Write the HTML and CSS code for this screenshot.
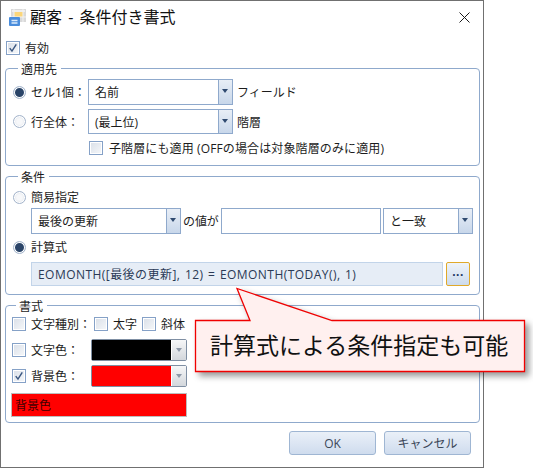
FILE: index.html
```html
<!DOCTYPE html>
<html lang="ja">
<head>
<meta charset="utf-8">
<title>顧客 - 条件付き書式</title>
<link rel="stylesheet" href="styles.css">
</head>
<body>
<svg class="defs" width="0" height="0" aria-hidden="true">
  <symbol id="tick" viewBox="0 0 14 14"><path d="M3.2 7.2 L5.8 10.6 L10.8 2.8" fill="none" stroke="#3a5680" stroke-width="1.7"/></symbol>
</svg>
<div class="window">
  <header class="titlebar">
    <div class="title-left">
      <svg class="app-icon" width="17" height="17" viewBox="0 0 17 17">
        <rect x="2" y="0" width="15" height="13" fill="#d9d9d9"/>
        <rect x="3" y="1" width="13" height="2" fill="#eeeeee"/>
        <rect x="5" y="3" width="9" height="5" fill="#fbd67a"/>
        <path d="M5 0V13M14 0V13M2 8H17" stroke="#f2f2f2" stroke-width="1"/>
        <rect x="0" y="8" width="11" height="9" rx="1" fill="#4a8ddc"/>
        <path d="M2.500 11.500H8.500M2.500 14H8.500" stroke="#dcebfb" stroke-width="1.400"/>
      </svg>
      <h1 class="title">顧客 - 条件付き書式</h1>
    </div>
    <svg class="close" width="11" height="11" viewBox="0 0 11 11"><path d="M.5.5 10.500 10.500M10.500.5.5 10.500" stroke="#1a1a1a" stroke-width="1"/></svg>
  </header>

  <label class="row enable"><span class="check on"><svg width="12" height="12"><use href="#tick"/></svg></span><span class="text">有効</span></label>

  <fieldset class="group group-target">
    <legend>適用先</legend>
    <div class="row">
      <span class="radio on"></span><span class="text radio-label">セル1個：</span>
      <div class="combo c-wide"><span class="value">名前</span><span class="arrow"></span></div>
      <span class="text after">フィールド</span>
    </div>
    <div class="row row-second">
      <span class="radio"></span><span class="text radio-label">行全体：</span>
      <div class="combo c-wide c-short"><span class="value">(最上位)</span><span class="arrow"></span></div>
      <span class="text after">階層</span>
    </div>
    <label class="row sub-check"><span class="check"></span><span class="text sub-text">子階層にも適用 (OFFの場合は対象階層のみに適用)</span></label>
  </fieldset>

  <fieldset class="group group-cond">
    <legend>条件</legend>
    <div class="row radio-row"><span class="radio"></span><span class="text">簡易指定</span></div>
    <div class="row indent simple">
      <div class="combo c-field"><span class="value">最後の更新</span><span class="arrow"></span></div>
      <span class="text tight">の値が</span>
      <div class="input"></div>
      <div class="combo c-op"><span class="value">と一致</span><span class="arrow"></span></div>
    </div>
    <div class="row radio-row second"><span class="radio on"></span><span class="text">計算式</span></div>
    <div class="row indent formula-row">
      <div class="formula">EOMONTH([最後の更新], 12) = EOMONTH(TODAY(), 1)</div>
      <button class="more" type="button">...</button>
    </div>
  </fieldset>

  <fieldset class="group group-format">
    <legend>書式</legend>
    <div class="row f-first">
      <span class="check"></span><span class="text f-label">文字種別：</span>
      <span class="check"></span><span class="text f-bold">太字</span>
      <span class="check"></span><span class="text f-italic">斜体</span>
    </div>
    <div class="row f-color">
      <span class="check"></span><span class="text f-label">文字色：</span>
      <div class="swatch"><span class="swatch-fill black"></span><span class="swatch-arrow"></span></div>
    </div>
    <div class="row f-color f-next">
      <span class="check on"><svg width="12" height="12"><use href="#tick"/></svg></span><span class="text f-label">背景色：</span>
      <div class="swatch"><span class="swatch-fill red"></span><span class="swatch-arrow"></span></div>
    </div>
    <div class="preview">背景色</div>
  </fieldset>

  <footer class="footer">
    <button class="btn" type="button">OK</button>
    <button class="btn" type="button">キャンセル</button>
  </footer>
</div>

<aside class="callout">
  <svg class="callout-shape" width="533" height="468" viewBox="0 0 533 468">
    <path d="M195.500 320.500H250L237 288.500 332 320.500H524.500V371.500H195.500Z" fill="#fff0ef" stroke="#f00000" stroke-width="1.300"/>
  </svg>
  <p class="callout-text">計算式による条件指定も可能</p>
</aside>
</body>
</html>
```
FILE: styles.css
```css
* { box-sizing: border-box; }
html, body { margin: 0; padding: 0; background: #fff; }
body {
  width: 533px;
  height: 468px;
  overflow: hidden;
  position: relative;
  font-family: "Open Sans", "Noto Sans CJK JP", sans-serif;
  font-size: 12px;
  color: #1c1c1c;
}
.defs { display: block; height: 0; }
.window {
  width: 484px;
  height: 468px;
  border: 1px solid #707070;
  background: #fff;
}
.titlebar {
  height: 34px;
  display: flex;
  align-items: center;
  justify-content: space-between;
  padding: 0 13px 2px 8px;
}
.title-left { display: flex; align-items: center; gap: 4px; }
.app-icon { display: block; }
.title { margin: 0; font-size: 16px; font-weight: 400; line-height: 20px; color: #111; word-spacing: 2px; }
.close { display: block; }

.row { display: flex; align-items: center; }
.text { line-height: 16px; padding-top: 2px; white-space: nowrap; }
.sub-text { letter-spacing: .12px; }
.enable { height: 14px; margin: 6px 0 0 5px; gap: 5px; }

.check {
  flex: none;
  width: 14px;
  height: 14px;
  border: 1px solid #85a1c7;
  box-shadow: inset 0 0 0 1px #fff;
  background: linear-gradient(135deg, #d9dfe8, #f6f8fa);
  display: flex;
  align-items: center;
  justify-content: center;
}
.check svg { display: block; }
.radio {
  flex: none;
  width: 13px;
  height: 13px;
  border-radius: 50%;
  border: 1px solid #a3b4cb;
  box-shadow: inset 0 0 0 1px #fff;
  background: radial-gradient(circle, #f7f8fa 0 35%, #d5dbe3 100%);
}
.radio.on { background: radial-gradient(circle, #2a4468 0 58%, #d5dbe3 66%); }

.group {
  margin: 5px 3px 0 4px;
  padding: 0 0 0 7px;
  border: 1px solid #8fa9cc;
  border-radius: 4px;
  min-width: 0;
}
.group legend {
  margin-left: 5px;
  padding: 0 4px 0 3px;
  line-height: 20px;
  height: 16px;
}
.group-target { padding-top: 3px; padding-bottom: 10px; }
.group-cond { margin-top: 2px; padding-top: 6px; padding-bottom: 8px; }
.group-format { margin-top: 2px; padding: 4px 0 5px 5px; }

.radio-label { width: 57px; margin-left: 5px; }
.row-second { margin-top: 4px; }
.after { margin-left: 4px; }
.sub-check { margin: 7px 0 0 76px; gap: 6px; height: 14px; }

.combo {
  display: flex;
  height: 26px;
  border: 1px solid #8fa9cc;
  background: #fff;
  flex: none;
}
.c-wide { width: 145px; }
.c-short { height: 25px; }
.c-field { width: 150px; }
.c-op { width: 90px; margin-left: 2px; }
.value { flex: 1; padding-left: 6px; line-height: 25px; white-space: nowrap; }
.arrow {
  flex: none;
  width: 14px;
  border-left: 1px solid #8fa9cc;
  background: linear-gradient(#e8eef6, #c8d7ea) ;
  position: relative;
}
.arrow::after {
  content: "";
  position: absolute;
  left: 3px;
  top: 9px;
  border: 3px solid transparent;
  border-top: 4px solid #2f4a70;
  border-bottom: 0;
}

.radio-row { gap: 5px; height: 14px; }
.radio-row.second { margin-top: 6px; }
.indent { margin-left: 18px; }
.simple { margin-top: 4px; }
.tight { margin-left: 2px; width: 36px; letter-spacing: -.1px; }
.input { width: 160px; height: 26px; margin-left: 2px; border: 1px solid #8fa9cc; background: #fff; flex: none; }
.formula-row { margin-top: 8px; }
.formula {
  width: 412px;
  height: 24px;
  padding-left: 6px;
  line-height: 24px;
  background: #e6edf6;
  border: 1px solid #c2d4e9;
  color: #2a3a55;
  white-space: nowrap;
  word-spacing: 1px;
  letter-spacing: .45px;
}
.more {
  width: 24px;
  height: 24px;
  margin: 0 0 0 3px;
  padding: 0 0 5px;
  border: 1px solid #e0a92a;
  border-radius: 2px;
  background: linear-gradient(#eef3f9, #ccdbed);
  font: 700 12px/14px "Liberation Sans", sans-serif;
  letter-spacing: .5px;
  color: #1f3864;
}

.f-first { height: 14px; margin-left: 1px; }
.f-label { margin-left: 5px; width: 60px; }
.f-first .f-label { width: 63px; }
.f-bold { margin-left: 5px; width: 29px; }
.f-italic { margin-left: 5px; }
.f-color { height: 22px; margin: 8px 0 0 1px; }
.f-next { margin-top: 4px; }
.swatch {
  width: 96px;
  height: 22px;
  display: flex;
  border: 1px solid #7f8fa3;
  border-radius: 2px;
  background: #fff;
}
.swatch-fill { width: 79px; }
.black { background: #000; }
.red { background: #f00; }
.swatch-arrow {
  flex: 1;
  margin-left: 1px;
  background: linear-gradient(#f6f7f8, #d3d7dc);
  position: relative;
}
.swatch-arrow::after {
  content: "";
  position: absolute;
  left: 4px;
  top: 8px;
  border: 3px solid transparent;
  border-top: 4px solid #8d98a8;
  border-bottom: 0;
}
.preview {
  width: 176px;
  height: 24px;
  margin-top: 6px;
  padding-left: 3px;
  line-height: 24px;
  background: #f00;
  border: 1px solid #bdbdbd;
  color: #400000;
}

.footer { display: flex; justify-content: flex-end; gap: 8px; margin-top: 8px; padding-right: 12px; }
.btn {
  width: 87px;
  height: 24px;
  padding: 2px 0 0;
  border: 1px solid #9fb6d3;
  border-radius: 3px;
  background: linear-gradient(#eaf0f8, #cfdcee);
  font: 12px/20px "Open Sans", "Noto Sans CJK JP", sans-serif;
  color: #3a4658;
}

.callout { position: absolute; left: 0; top: 0; width: 533px; height: 468px; pointer-events: none; }
.callout-shape { display: block; filter: drop-shadow(4px 4px 3px rgba(0,0,0,.4)); }
.callout-text {
  position: absolute;
  left: 210px;
  top: 329px;
  margin: 0;
  font-size: 23px;
  line-height: 32px;
  white-space: nowrap;
  color: #111;
}
```
